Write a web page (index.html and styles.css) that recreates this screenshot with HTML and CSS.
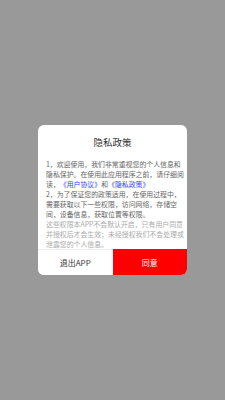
FILE: index.html
```html
<!DOCTYPE html>
<html lang="zh-CN">
<head>
    <meta charset="UTF-8">
    <meta name="viewport" content="width=device-width, initial-scale=1.0">
    <title>隐私政策</title>
    <link rel="stylesheet" href="styles.css">
</head>
<body>
    <div class="dialog">
        <h2 class="title">隐私政策</h2>

        <div class="content">
            <p>1，欢迎使用，我们非常重视您的个人信息和隐私保护。在使用此应用程序之前，请仔细阅读，<a href="#">《用户协议》</a>和<a href="#">《隐私政策》</a></p>
            <p>2，为了保证您的政策适用，在使用过程中，需要获取以下一些权限，访问网络，存储空间，设备信息，获取位置等权限。</p>
            <p class="note">这些权限本APP不会默认开启，只有用户同意并授权后才会生效；未经授权我们不会处理或泄露您的个人信息。</p>
        </div>

        <!-- bottom buttons -->
        <div class="actions">
            <button class="btn-exit">退出APP</button>
            <button class="btn-agree">同意</button>
        </div>
    </div>
</body>
</html>
```
FILE: styles.css
```css
body {
    font-family: 'Noto Sans CJK SC', 'Noto Sans', sans-serif;
    background-color: #999999;
    margin: 0;
    padding: 0;
    display: flex;
    justify-content: center;
    align-items: center;
    height: 100vh;
}
.dialog {
    background-color: #ffffff;
    border-radius: 6px;
    width: 149px;
    height: 150px;
    overflow: hidden;
    display: flex;
    flex-direction: column;
}
.title {
    margin: 0;
    padding-top: 10px;
    font-size: 9.5px;
    line-height: 14px;
    font-weight: normal;
    color: #333;
    text-align: center;
}
.content {
    flex: 1;
    margin-top: 10px;
    padding: 0 1px 0 8px;
    font-size: 6.9px;
    line-height: 10px;
    color: #666;
    text-spacing-trim: space-all; /* keep full-width punctuation */
}
.content p {
    margin: 0;
}
.content a {
    color: #2f45ff;
    text-decoration: none;
}
.note {
    color: #aaa;
}
.actions {
    display: flex;
    height: 25px;
    border-top: 1px solid #eeeeee;
}
.actions button {
    flex: 1;
    border: none;
    margin: 0;
    padding: 0;
    font-family: inherit;
    font-size: 8px;
    cursor: pointer;
}
.btn-exit {
    background-color: #ffffff;
    color: #333;
}
.btn-agree {
    background-color: #ff0000;
    color: #ffffff;
    margin-top: -1px !important;
}
```
